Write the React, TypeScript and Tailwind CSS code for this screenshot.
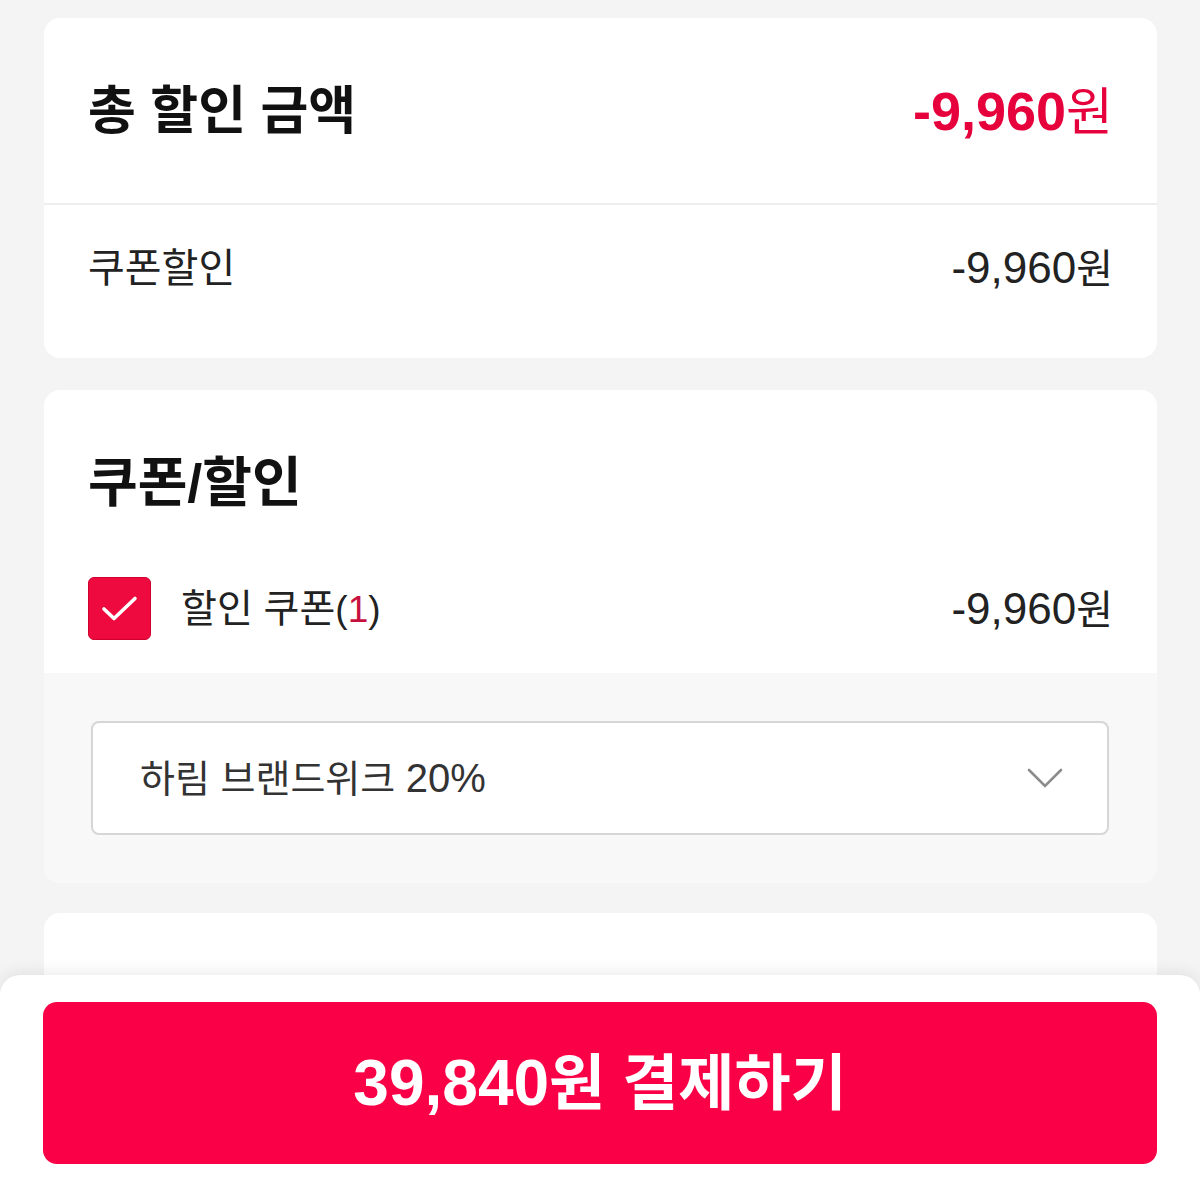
import React from "react";

const FONT = { fontFamily: '"Liberation Sans", "Noto Sans CJK KR", sans-serif' };

const Amount = ({ value, className }: { value: string; className?: string }) => (
  <span className={className}>
    <span className="text-[44px]">{value}</span>
    <span className="text-[40px]">원</span>
  </span>
);

const CheckIcon = () => (
  <svg width="40" height="40" viewBox="0 0 40 40" fill="none">
    <path
      d="M4 20 L14 29.5 L35 9.5"
      stroke="#fff"
      strokeWidth="3.6"
      strokeLinecap="round"
      strokeLinejoin="round"
    />
  </svg>
);

const Chevron = () => (
  <svg width="36" height="22" viewBox="0 0 36 22" fill="none">
    <path d="M2 3 L18 19 L34 3" stroke="#8c8c8c" strokeWidth="2.6" strokeLinecap="round" />
  </svg>
);

export default function App() {
  return (
    <div className="relative h-[1178px] overflow-hidden bg-[#f4f4f4]" style={FONT}>
      <div className="flex flex-col pl-[44px] pr-[43px] pt-[18px]">
        {/* 총 할인 금액 */}
        <div className="rounded-[16px] bg-white">
          <div className="flex h-[185px] items-center justify-between px-[44px]">
            <h2 className="text-[52px] font-bold leading-none text-[#111]">총 할인 금액</h2>
            <span className="leading-none text-[#e6003c]">
              <span className="text-[54px] font-bold">-9,960</span>
              <span className="text-[51px]">원</span>
            </span>
          </div>
          <div className="h-[2px] bg-[#eeeeee]" />
          <div className="flex h-[153px] items-start justify-between px-[44px] pt-[40px]">
            <span className="text-[40px] leading-[46px] text-[#222]">쿠폰할인</span>
            <Amount value="-9,960" className="leading-[46px] text-[#222]" />
          </div>
        </div>

        {/* 쿠폰/할인 */}
        <div className="mt-[32px] overflow-hidden rounded-[16px] bg-white">
          <div className="px-[44px] pt-[64px]">
            <h2 className="h-[58px] text-[54px] font-bold leading-[58px] text-[#111]">쿠폰/할인</h2>
            <div className="mt-[65px] flex h-[63px] items-center justify-between">
              <div className="flex items-center">
                <span className="flex h-[63px] w-[63px] items-center justify-center rounded-[6px] border border-[#d0002e] bg-[#ee0a3e]">
                  <CheckIcon />
                </span>
                <span className="ml-[30px] text-[39px] leading-none text-[#222]">
                  할인 쿠폰
                  <span className="text-[37px]">
                    (<span className="text-[#c8103f]">1</span>)
                  </span>
                </span>
              </div>
              <Amount value="-9,960" className="leading-none text-[#222]" />
            </div>
          </div>
          <div className="mt-[33px] bg-[#f8f8f8] pb-[48px] pl-[47px] pr-[48px] pt-[48px]">
            <div className="flex h-[114px] items-center justify-between rounded-[8px] border-2 border-[#d6d6d6] bg-white pl-[47px] pr-[44px]">
              <span className="text-[38px] leading-none text-[#333]">
                하림 브랜드위크 <span className="text-[40px]">20%</span>
              </span>
              <Chevron />
            </div>
          </div>
        </div>

        {/* next card, partially hidden */}
        <div className="mt-[30px] h-[300px] rounded-[16px] bg-white" />
      </div>

      {/* bottom pay bar */}
      <div className="absolute inset-x-0 bottom-0 h-[203px] rounded-t-[20px] bg-white px-[43px] pt-[27px] shadow-[0_-4px_14px_rgba(0,0,0,0.07)]">
        <button className="flex h-[162px] w-full items-center justify-center rounded-[14px] bg-[#fa0046] text-white">
          <span className="font-bold leading-none">
            <span className="text-[64px]">39,840</span>
            <span className="text-[61px]">원 결제하기</span>
          </span>
        </button>
      </div>
    </div>
  );
}
